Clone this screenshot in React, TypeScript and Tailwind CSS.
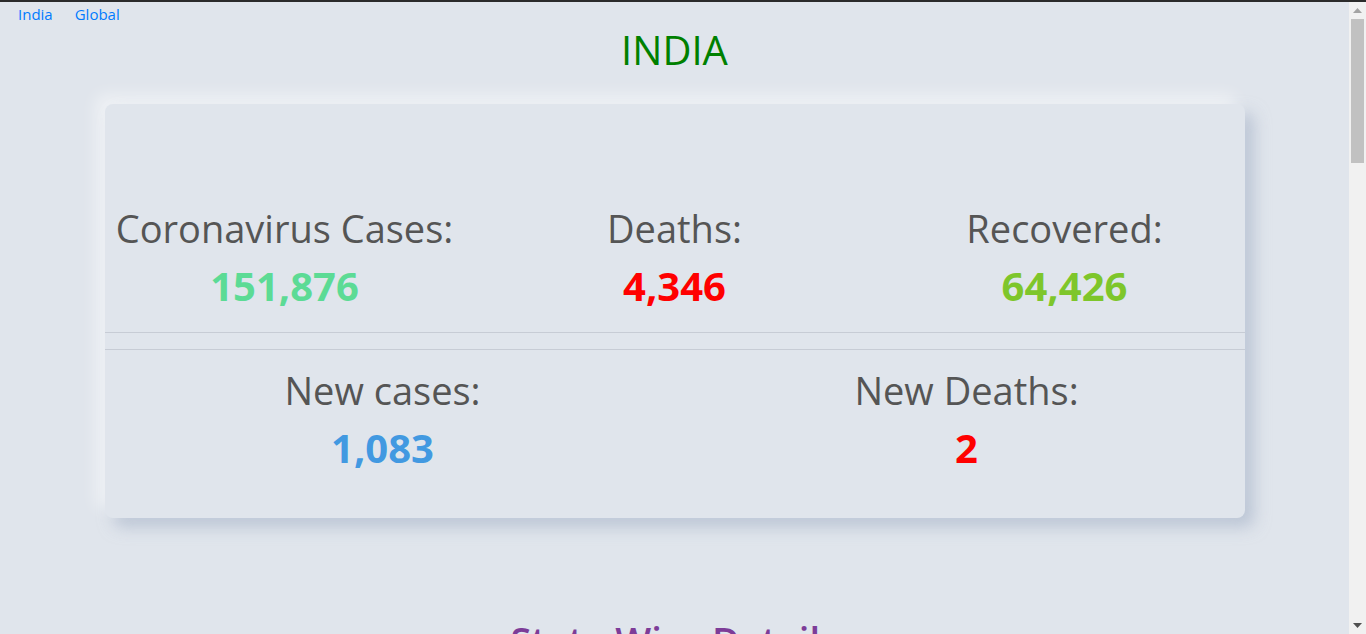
import React from "react";

const font = { fontFamily: '"Open Sans", "Noto Sans", sans-serif' };

function Stat({ label, value, color }: { label: string; value: string; color: string }) {
  return (
    <div className="text-center">
      <p className="text-[38px] leading-[57px] text-[#555555]">{label}</p>
      <p className={`text-[40px] font-bold leading-[57px] ${color}`}>{value}</p>
    </div>
  );
}

function Scrollbar() {
  return (
    <div className="flex w-[17px] flex-none flex-col items-center bg-[#f1f1f1]">
      <svg width="9" height="5" viewBox="0 0 9 5" className="mt-[6px]">
        <path d="M0 5 L4.5 0 L9 5 Z" fill="#a3a3a3" />
      </svg>
      <div className="mt-[6px] h-[144px] w-[13px] bg-[#c1c1c1]" />
      <div className="flex-1" />
      <svg width="9" height="5" viewBox="0 0 9 5" className="mb-[6px]">
        <path d="M0 0 L9 0 L4.5 5 Z" fill="#505050" />
      </svg>
    </div>
  );
}

export default function App() {
  return (
    <div className="flex h-[634px] flex-col overflow-hidden bg-[#e0e5ec]" style={font}>
      <div className="h-[2px] flex-none bg-[#2b2b2b]" />
      <div className="flex min-h-0 flex-1">
        <main className="min-w-0 flex-1 overflow-hidden">
          <nav className="flex gap-[22px] pl-[18px] text-[15px] leading-6 text-[#007bff]">
            <a href="#">India</a>
            <a href="#">Global</a>
          </nav>
          <h1 className="text-center text-[40px] leading-[48px] text-[#008000]">INDIA</h1>

          <div className="mx-auto mt-[30px] w-[1140px] rounded-lg bg-[#e0e5ec] shadow-[-9px_-9px_16px_rgba(255,255,255,0.5),9px_9px_16px_rgba(163,177,198,0.6)]">
            <div className="grid grid-cols-3 gap-x-[30px] pt-[96px] pb-[18px]">
              <Stat label="Coronavirus Cases:" value="151,876" color="text-[#5cdb95]" />
              <Stat label="Deaths:" value="4,346" color="text-[#ff0000]" />
              <Stat label="Recovered:" value="64,426" color="text-[#7ec62b]" />
            </div>
            <hr className="border-t border-[#c7ccd5]" />
            <hr className="mt-[16px] border-t border-[#c7ccd5]" />
            <div className="grid grid-cols-2 gap-x-[28px] pt-[12px] pb-[42px]">
              <Stat label="New cases:" value="1,083" color="text-[#4299e1]" />
              <Stat label="New Deaths:" value="2" color="text-[#ff0000]" />
            </div>
          </div>

          <h2 className="mt-[98px] text-center text-[38px] font-semibold leading-[48px] text-[#7d3c98]">
            State Wise Details
          </h2>
        </main>
        <Scrollbar />
      </div>
    </div>
  );
}
